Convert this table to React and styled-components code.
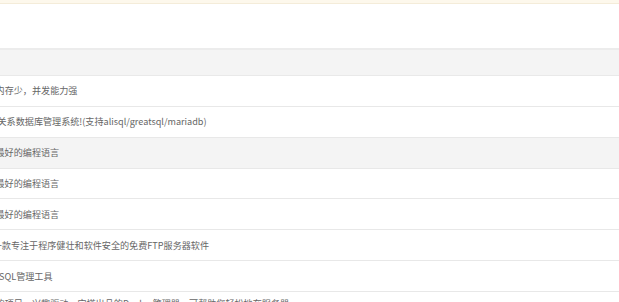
import styled, { createGlobalStyle } from 'styled-components';

const GlobalStyle = createGlobalStyle`
  html, body {
    margin: 0;
    padding: 0;
    background: #fff;
    font-family: "Noto Sans CJK SC", "Liberation Sans", sans-serif;
  }
`;

const Page = styled.div`
  width: 619px;
  height: 302px;
  overflow: hidden;
  background: #fff;
`;

const Notice = styled.div`
  height: 3px;
  background: #fdf8ec;
  border-bottom: 1px solid #f4ecd9;
`;

const Toolbar = styled.div`
  height: 44px;
`;

const Scroller = styled.div`
  overflow: hidden;
`;

const Table = styled.div`
  width: 1400px;
  margin-left: -259px;
`;

const HeadRow = styled.div`
  display: grid;
  grid-template-columns: 200px 1fr;
  height: 25px;
  background: #f4f4f4;
  border-top: 2px solid #ececec;
  border-bottom: 1px solid #e9e9e9;
`;

const Row = styled.div`
  display: grid;
  grid-template-columns: 200px 1fr;
  align-items: center;
  min-height: 29.86px;
  background: ${(p) => (p.$hover ? '#f4f4f4' : '#fff')};
  border-bottom: 1px solid #e8e8e8;
`;

const Cell = styled.div`
  font-size: 9.1px;
  line-height: 1;
  color: #666;
  white-space: nowrap;
`;

/* long descriptions wrap onto two lines */
const WrapCell = styled(Cell)`
  white-space: normal;
  width: 356px;
  line-height: 13px;
  padding: 5px 0;
`;

const Link = styled.span`
  color: #20a53a;
`;

const soft = [
  { name: 'Nginx 1.22.1', desc: '轻量级，占有内存少，并发能力强' },
  { name: 'MySQL 5.7.40', desc: 'MySQL是一种关系数据库管理系统!(支持alisql/greatsql/mariadb)' },
  { name: 'PHP-8.1', desc: 'PHP是世界上最好的编程语言', hover: true },
  { name: 'PHP-7.4', desc: 'PHP是世界上最好的编程语言' },
  { name: 'PHP-5.6', desc: 'PHP是世界上最好的编程语言' },
  { name: 'Pure-Ftpd 1.0.49', desc: 'Pure-Ftpd是一款专注于程序健壮和软件安全的免费FTP服务器软件' },
  { name: 'phpMyAdmin 5.0', desc: '著名Web端MySQL管理工具' },
  {
    name: 'Docker管理器',
    desc: '一个完全开源的项目，兴趣驱动，宝塔出品的Docker管理器，可帮助您轻松地在服务器上部署和管理容器应用，详情请访问',
    link: '官网',
    wrap: true,
  },
];

const App = () => {
  return (
    <Page>
      <GlobalStyle />
      <Notice />
      <Toolbar />
      <Scroller>
        <Table>
          <HeadRow>
            <Cell />
            <Cell />
          </HeadRow>
          {soft.map((s) => {
            const Desc = s.wrap ? WrapCell : Cell;
            return (
              <Row key={s.name} $hover={s.hover}>
                <Cell>{s.name}</Cell>
                <Desc>
                  {s.desc}
                  {s.link && <Link>{s.link}</Link>}
                </Desc>
              </Row>
            );
          })}
        </Table>
      </Scroller>
    </Page>
  );
};

export default App;
